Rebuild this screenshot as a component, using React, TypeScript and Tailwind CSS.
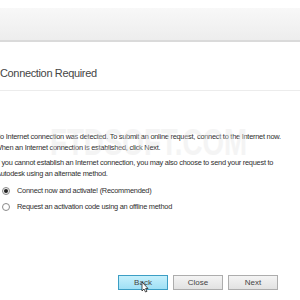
export default function App() {
  return (
    <div
      className="relative w-[300px] h-[300px] overflow-hidden bg-white text-[#333]"
      style={{ fontFamily: "'Liberation Sans', Arial, sans-serif" }}
    >
      {/* Header band */}
      <div className="h-[8px] bg-white" />
      <div className="h-[34px] bg-gradient-to-b from-[#f8f8f8] to-[#ededed] border-b-2 border-[#dadada]" />

      {/* Title */}
      <div className="h-[49px] pt-[25px] border-b border-[#ececec]">
        <h1 className="text-[11px] leading-[12px] text-[#454545] tracking-[-0.35px]">Connection Required</h1>
      </div>

      {/* Body */}
      <div className="pt-[40px] text-[7.4px] leading-[11px] text-[#2e2e2e] tracking-[-0.25px]">
        <p className="-ml-[5px] whitespace-nowrap">
          No Internet connection was detected. To submit an online request, connect to the Internet now.
          <br />
          When an Internet connection is established, click Next.
        </p>
        <p className="mt-[4px] -ml-[4px] whitespace-nowrap">
          If you cannot establish an Internet connection, you may also choose to send your request to
          <br />
          Autodesk using an alternate method.
        </p>

        <div className="mt-[6px] flex flex-col gap-[5px] pl-[2px]">
          <label className="flex items-center gap-[7px]">
            <span className="w-[8px] h-[8px] rounded-full border border-[#8a8a8a] bg-[#f2f2f2] flex items-center justify-center">
              <span className="w-[4px] h-[4px] rounded-full bg-[#222]" />
            </span>
            Connect now and activate! (Recommended)
          </label>
          <label className="flex items-center gap-[7px]">
            <span className="w-[8px] h-[8px] rounded-full border border-[#8a8a8a] bg-white" />
            Request an activation code using an offline method
          </label>
        </div>
      </div>

      {/* Buttons */}
      <div className="absolute left-[118px] top-[275px] flex gap-[5px] text-[8px] text-[#444]">
        <button className="relative w-[50px] h-[15px] border border-[#3c9ec4] bg-gradient-to-b from-[#c6f0fc] to-[#9fe0f5]">
          Back
          <svg className="absolute left-[22px] top-[5px]" width="8" height="12" viewBox="0 0 8 12">
            <path d="M1 1 L1 10 L3 8 L4.5 11 L6 10.3 L4.6 7.5 L7 7.5 Z" fill="#fff" stroke="#222" strokeWidth="0.8" />
          </svg>
        </button>
        <button className="w-[50px] h-[15px] border border-[#adadad] bg-gradient-to-b from-[#f4f4f4] to-[#e2e2e2]">Close</button>
        <button className="w-[50px] h-[15px] border border-[#adadad] bg-gradient-to-b from-[#f4f4f4] to-[#e2e2e2]">Next</button>
      </div>

      {/* Watermark */}
      <div className="pointer-events-none absolute left-[50px] top-[123px] text-[36px] leading-[40px] font-bold text-[#e6e6e6] opacity-40 scale-x-[0.77] origin-left whitespace-nowrap">
        FTDSOFT.COM
      </div>
    </div>
  );
}
